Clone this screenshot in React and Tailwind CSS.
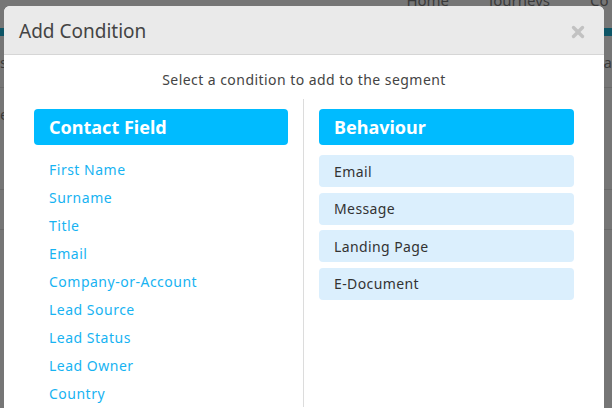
import { X } from 'lucide-react'

const contactFields = [
  'First Name',
  'Surname',
  'Title',
  'Email',
  'Company-or-Account',
  'Lead Source',
  'Lead Status',
  'Lead Owner',
  'Country',
]

const behaviours = ['Email', 'Message', 'Landing Page', 'E-Document']

export default function App() {
  return (
    <div
      className="relative w-[612px] h-[408px] overflow-hidden bg-[#767676] text-[#3a3a3a]"
      style={{ fontFamily: '"Noto Sans", "Open Sans", sans-serif' }}
    >
      {/* page behind the overlay */}
      <div className="flex flex-col">
        <nav className="flex justify-end gap-[40px] h-[38px] -mt-[10px] text-[15px] leading-[20px] whitespace-nowrap">
          <span>Home</span>
          <span>Journeys</span>
          <span className="w-[22px] overflow-hidden">Co</span>
        </nav>
        <div className="h-[8px] bg-[#0e5566]" />
        <div className="flex justify-between h-[52px] pt-[16px] text-[15px] leading-[20px] border-b border-[#6a6a6a]">
          <span>s</span>
          <span>sa</span>
        </div>
        <div className="h-[102px] pt-[16px] text-[15px] leading-[20px] border-b border-[#6a6a6a]">e</div>
        <div className="h-[40px] border-b border-[#6a6a6a]" />
      </div>

      {/* modal */}
      <div className="absolute left-[4px] top-[6px] w-[600px] h-[420px] rounded-t-[6px] bg-white overflow-hidden">
        <div className="flex items-center justify-between h-[49px] pt-[3px] pl-[15px] pr-[17px] bg-[#eaeaea] border-b border-[#d6d6d6]">
          <h2 className="text-[19px] text-[#444]">Add Condition</h2>
          <X className="w-[18px] h-[18px] text-[#c2c2c2]" strokeWidth={4.5} />
        </div>

        <p className="mt-[14px] text-center text-[14px] tracking-[0.45px] text-[#444]">
          Select a condition to add to the segment
        </p>

        <div className="flex mt-[9px] px-[30px]">
          <div className="w-[270px] pt-[10px] border-r border-[#dcdcdc] pr-[15px]">
            <div className="h-[36px] flex items-center px-[15px] rounded-[4px] bg-[#00bbff] text-white text-[18px] font-bold">
              Contact Field
            </div>
            <ul className="mt-[10px] px-[15px]">
              {contactFields.map((f) => (
                <li key={f} className="h-[28px] flex items-center text-[14px] tracking-[0.5px] text-[#17b3f2]">
                  {f}
                </li>
              ))}
            </ul>
          </div>

          <div className="w-[270px] pt-[10px] pl-[15px]">
            <div className="h-[36px] flex items-center px-[15px] rounded-[4px] bg-[#00bbff] text-white text-[18px] font-bold">
              Behaviour
            </div>
            <div className="mt-[10px] flex flex-col gap-[5.5px]">
              {behaviours.map((b) => (
                <div
                  key={b}
                  className="h-[32px] flex items-center px-[15px] rounded-[4px] bg-[#dbeffd] text-[14px] tracking-[0.4px] text-[#333]"
                >
                  {b}
                </div>
              ))}
            </div>
          </div>
        </div>
      </div>
    </div>
  )
}
